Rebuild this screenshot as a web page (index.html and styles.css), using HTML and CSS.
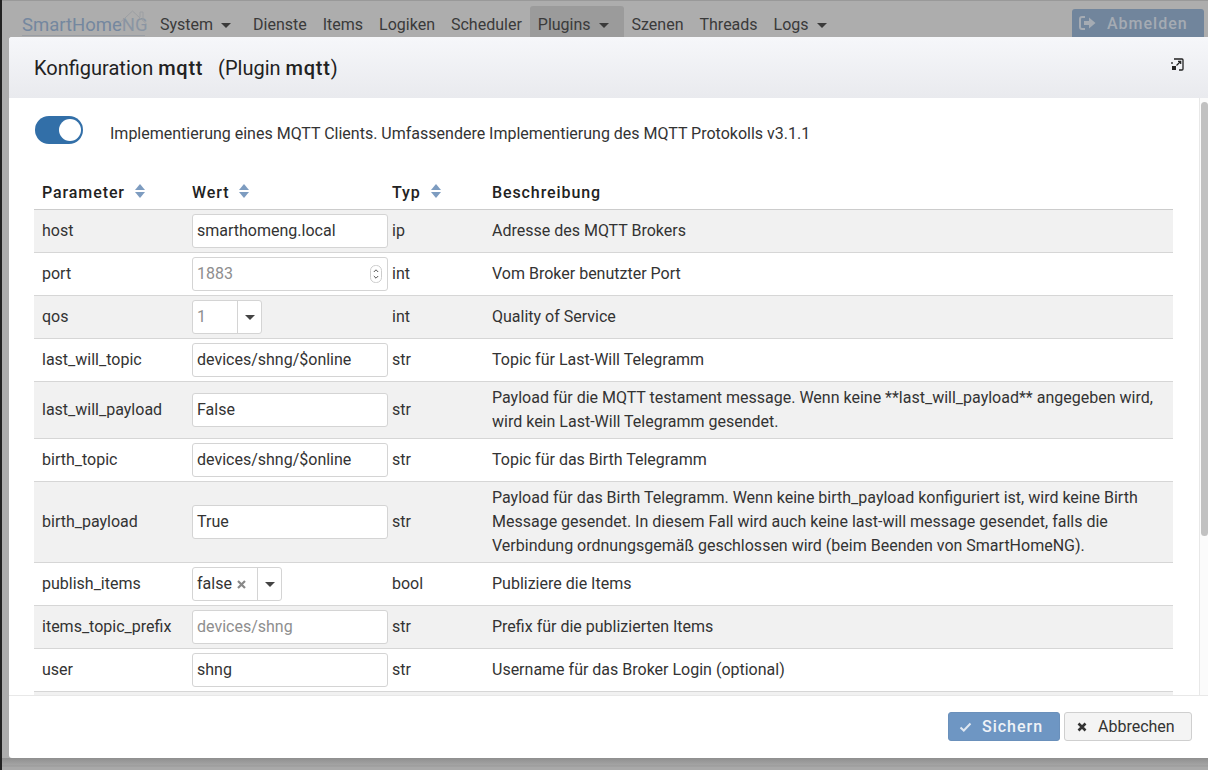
FILE: index.html
```html
<!DOCTYPE html>
<html lang="de">
<head>
	<meta charset="utf-8">
	<title>SmartHomeNG</title>
	<link rel="stylesheet" href="styles.css">
</head>
<body>

<div class="desktop-edge"></div>

<nav class="navbar">
	<a class="brand"><span class="brand-main">SmartHome</span><span class="brand-ng">NG</span>
		<svg class="brand-roof" width="31" height="15" viewBox="0 0 31 15"><path d="M1 14.500 L15.500 1 L30 14.500 M23 7 V2 H26 V10.500" fill="none" stroke="#9c9fa3" stroke-width="1"/></svg>
	</a>
	<a class="nav-item nav-system">System <span class="caret"></span></a>
	<a class="nav-item">Dienste</a>
	<a class="nav-item">Items</a>
	<a class="nav-item">Logiken</a>
	<a class="nav-item">Scheduler</a>
	<a class="nav-item nav-active">Plugins <span class="caret"></span></a>
	<a class="nav-item">Szenen</a>
	<a class="nav-item">Threads</a>
	<a class="nav-item">Logs <span class="caret"></span></a>
	<button class="logout">
		<svg width="17" height="14" viewBox="0 0 17 14"><path d="M6 1 H3 Q1 1 1 3 V11 Q1 13 3 13 H6" fill="none" stroke="#a5abb3" stroke-width="2"/><path d="M5 5 H10 V1.500 L16.500 7 L10 12.500 V9 H5 Z" fill="#a5abb3"/></svg>
		Abmelden
	</button>
</nav>

<div class="modal">
	<div class="modal-header">
		<h4 class="modal-title">Konfiguration <b>mqtt</b> &nbsp; (Plugin <b>mqtt</b>)</h4>
		<svg class="expand" width="13" height="13" viewBox="0 0 13 13"><path d="M3 1 H11 Q12 1 12 2 V11 Q12 12 11 12 H8 M1 4 V6" fill="none" stroke="#222" stroke-width="1.300"/><rect x="1" y="8" width="4" height="4" fill="#222"/><path d="M5.500 7.500 L9.500 3.500 M7 3.300 H9.700 V6" fill="none" stroke="#222" stroke-width="1.200"/></svg>
	</div>

	<div class="modal-body">
		<div class="scrollbar"><div class="scroll-thumb"></div></div>

		<div class="intro">
			<span class="switch"><span class="switch-knob"></span></span>
			<span class="intro-text">Implementierung eines MQTT Clients. Umfassendere Implementierung des MQTT Protokolls v3.1.1</span>
		</div>

		<table class="params">
			<thead>
				<tr>
					<th class="col-name">Parameter <span class="sort"></span></th>
					<th class="col-value">Wert <span class="sort"></span></th>
					<th class="col-type">Typ <span class="sort"></span></th>
					<th>Beschreibung</th>
				</tr>
			</thead>
			<tbody>
				<tr>
					<td>host</td>
					<td class="col-value"><div class="field">smarthomeng.local</div></td>
					<td class="col-type">ip</td>
					<td>Adresse des MQTT Brokers</td>
				</tr>
				<tr>
					<td>port</td>
					<td class="col-value"><div class="field muted">1883
						<svg class="spinner" width="12" height="18" viewBox="0 0 12 18"><rect x="0.500" y="0.500" width="11" height="17" rx="5" fill="#fff" stroke="#ccc"/><path d="M3.800 7 L6 4.800 L8.200 7 M3.800 11 L6 13.200 L8.200 11" fill="none" stroke="#555" stroke-width="1"/></svg>
					</div></td>
					<td class="col-type">int</td>
					<td>Vom Broker benutzter Port</td>
				</tr>
				<tr>
					<td>qos</td>
					<td class="col-value"><div class="select select-qos"><span class="select-value muted">1</span><span class="select-arrow"><span class="caret"></span></span></div></td>
					<td class="col-type">int</td>
					<td>Quality of Service</td>
				</tr>
				<tr>
					<td>last_will_topic</td>
					<td class="col-value"><div class="field">devices/shng/$online</div></td>
					<td class="col-type">str</td>
					<td>Topic für Last-Will Telegramm</td>
				</tr>
				<tr>
					<td>last_will_payload</td>
					<td class="col-value"><div class="field">False</div></td>
					<td class="col-type">str</td>
					<td>Payload für die MQTT testament message. Wenn keine **last_will_payload** angegeben wird, wird kein Last-Will Telegramm gesendet.</td>
				</tr>
				<tr>
					<td>birth_topic</td>
					<td class="col-value"><div class="field">devices/shng/$online</div></td>
					<td class="col-type">str</td>
					<td>Topic für das Birth Telegramm</td>
				</tr>
				<tr>
					<td>birth_payload</td>
					<td class="col-value"><div class="field">True</div></td>
					<td class="col-type">str</td>
					<td>Payload für das Birth Telegramm. Wenn keine birth_payload konfiguriert ist, wird keine Birth Message gesendet. In diesem Fall wird auch keine last-will message gesendet, falls die Verbindung ordnungsgemäß geschlossen wird (beim Beenden von SmartHomeNG).</td>
				</tr>
				<tr>
					<td>publish_items</td>
					<td class="col-value"><div class="select select-bool"><span class="select-value">false <svg class="clear" width="9" height="9" viewBox="0 0 9 9"><path d="M1 1 L8 8 M8 1 L1 8" fill="none" stroke="#888" stroke-width="2.200"/></svg></span><span class="select-arrow"><span class="caret"></span></span></div></td>
					<td class="col-type">bool</td>
					<td>Publiziere die Items</td>
				</tr>
				<tr>
					<td>items_topic_prefix</td>
					<td class="col-value"><div class="field muted">devices/shng</div></td>
					<td class="col-type">str</td>
					<td>Prefix für die publizierten Items</td>
				</tr>
				<tr>
					<td>user</td>
					<td class="col-value"><div class="field">shng</div></td>
					<td class="col-type">str</td>
					<td>Username für das Broker Login (optional)</td>
				</tr>
				<tr>
					<td></td>
					<td class="col-value"><div class="field"></div></td>
					<td class="col-type"></td>
					<td></td>
				</tr>
			</tbody>
		</table>
	</div>

	<div class="modal-footer">
		<button class="btn btn-save">
			<svg width="13" height="10" viewBox="0 0 13 10"><path d="M1.500 5.500 L4.800 8.500 L11.500 1.500" fill="none" stroke="#dfe7f1" stroke-width="2"/></svg>
			Sichern
		</button>
		<button class="btn btn-cancel">
			<svg width="10" height="10" viewBox="0 0 10 10"><path d="M1.500 1.500 L8.500 8.500 M8.500 1.500 L1.500 8.500" fill="none" stroke="#333" stroke-width="2.600"/></svg>
			Abbrechen
		</button>
	</div>
</div>

</body>
</html>
```

FILE: styles.css
```css
html, body {
	margin: 0;
	height: 100%;
	overflow: hidden;
}

body {
	position: relative;
	background: linear-gradient(#adadad 758px, #8f8f8f 758px, #a4a4a4 765px, #999 766px, #a9a9a9 767px);
	font-family: Roboto, sans-serif;
	font-size: 16px;
	line-height: 24px;
	color: #333;
}

/* dark sliver of the desktop behind the browser window */
.desktop-edge {
	position: absolute;
	left: 0;
	top: 0;
	bottom: 0;
	width: 2px;
	background: #222;
}

.navbar {
	display: flex;
	align-items: flex-end;
	height: 37px;
	padding: 0 4px 0 22px;
	box-sizing: border-box;
	border-top: 1px solid #999;
	background: #adadad;
	color: #3a3a3a;
}

.brand {
	position: relative;
	width: 130px;
	height: 24px;
	font-size: 18.500px;
	color: #74879f;
}

.brand::after {
	content: "";
	position: absolute;
	left: 0;
	width: 123px;
	top: 22px;
	height: 1px;
	background: #9a9ea4;
}

.brand-ng {
	color: #8a95a3;
}

.brand-roof {
	position: absolute;
	left: 95px;
	top: -3px;
}

.nav-item {
	height: 31px;
	box-sizing: border-box;
	padding: 7px 8px 0;
}

.nav-system {
	margin-right: 6px;
}

.nav-active {
	background: #9b9b9b;
	border-radius: 3px 3px 0 0;
	padding-right: 15px;
}

.caret {
	display: inline-block;
	width: 0;
	height: 0;
	margin-left: 4px;
	vertical-align: 2px;
	border-top: 5px solid #3a3a3a;
	border-left: 5px solid transparent;
	border-right: 5px solid transparent;
}

.logout {
	display: flex;
	align-items: center;
	gap: 11px;
	margin-left: auto;
	width: 132px;
	height: 28px;
	padding: 0 0 0 7px;
	border: 0;
	border-radius: 3px 3px 0 0;
	background: #71859c;
	color: #a5abb3;
	font: 500 16px Roboto, sans-serif;
	letter-spacing: 1px;
}

.modal {
	position: absolute;
	left: 9px;
	right: 0;
	top: 37px;
	height: 721px;
	display: flex;
	flex-direction: column;
	background: #fff;
	border-radius: 3px 0 0 3px;
}

.modal-header {
	position: relative;
	flex: none;
	height: 61px;
	padding: 0 25px;
	box-sizing: border-box;
	display: flex;
	align-items: center;
	background: linear-gradient(#f6f7fa, #e9eaee);
	border-radius: 3px 0 0 0;
}

.modal-title {
	margin: 0;
	font-size: 20px;
	font-weight: 400;
	color: #222;
}

.modal-title b {
	font-weight: 500;
	letter-spacing: 0.75px;
}

.expand {
	position: absolute;
	right: 24px;
	top: 21px;
}

.modal-body {
	position: relative;
	flex: 1;
	overflow: hidden;
	padding: 0 26px 0 25px;
	border-bottom: 1px solid #e8e8e8;
}

.scrollbar {
	position: absolute;
	right: 0;
	top: 0;
	bottom: 0;
	width: 7px;
	padding: 4px 0 0 1px;
	background: #fbfbfb;
	border-left: 1px solid #e8e8e8;
}

.scroll-thumb {
	width: 7px;
	height: 434px;
	border-radius: 4px;
	background: #c1c1c1;
}

.intro {
	display: flex;
	align-items: center;
	height: 65px;
	margin-bottom: 14px;
	padding-left: 1px;
}

.intro-text {
	padding-top: 6px;
}

.switch {
	flex: none;
	display: block;
	position: relative;
	width: 48px;
	height: 28px;
	margin-right: 27px;
	margin-top: -1px;
	border-radius: 14px;
	background: #326fa8;
}

.switch-knob {
	position: absolute;
	left: 24px;
	top: 3px;
	width: 22px;
	height: 22px;
	border-radius: 50%;
	background: #fff;
}

.params {
	width: 1139px;
	border-collapse: collapse;
	table-layout: fixed;
}

.params th {
	height: 32px;
	padding: 0 8px;
	text-align: left;
	font-weight: 500;
	letter-spacing: 0.9px;
	white-space: nowrap;
	color: #222;
}

.params thead tr {
	border-bottom: 1px solid #ccc;
}

.params td {
	padding: 4px 8px;
	border-bottom: 1px solid #d6d6d6;
}

.params tbody tr:nth-child(odd) {
	background: #f1f1f1;
}

.col-name {
	width: 134px;
}

.params .col-value {
	width: 200px;
	box-sizing: border-box;
	padding-right: 0;
}

.params .col-type {
	width: 84px;
}

.sort {
	display: inline-block;
	position: relative;
	width: 11px;
	height: 14px;
	margin-left: 5px;
	vertical-align: 0;
}

.sort::before,
.sort::after {
	content: "";
	position: absolute;
	left: 0;
	border-left: 5.500px solid transparent;
	border-right: 5.500px solid transparent;
}

.sort::before {
	top: 0;
	border-bottom: 6px solid #7d9cc0;
}

.sort::after {
	bottom: 0;
	border-top: 6px solid #7d9cc0;
}

.field {
	display: flex;
	align-items: center;
	justify-content: space-between;
	width: 196px;
	height: 34px;
	box-sizing: border-box;
	padding: 0 4px;
	background: #fff;
	border: 1px solid #d4d4d4;
	border-radius: 3px;
	color: #333;
}

.field.muted {
	color: #8e8e8e;
}

.muted {
	color: #8e8e8e;
}

.spinner {
	margin-right: 1px;
}

.select {
	display: inline-flex;
	height: 34px;
	box-sizing: border-box;
	vertical-align: top;
	background: #fff;
	border: 1px solid #d4d4d4;
	border-radius: 3px;
	line-height: 32px;
}

.select-value {
	display: block;
	padding-left: 4px;
	white-space: nowrap;
}

.select-qos .select-value {
	width: 40px;
}

.select-bool .select-value {
	width: 60px;
}

.clear {
	margin-left: 1px;
}

.select-arrow {
	display: block;
	width: 23px;
	border-left: 1px solid #d4d4d4;
	text-align: center;
}

.select-arrow .caret {
	margin-left: 0;
	border-top-color: #444;
}

.modal-footer {
	flex: none;
	display: flex;
	justify-content: flex-end;
	align-items: flex-start;
	gap: 4px;
	height: 62px;
	padding: 16px 16px 0 0;
	box-sizing: border-box;
}

.btn {
	display: flex;
	align-items: center;
	height: 29px;
	box-sizing: border-box;
	border-radius: 3px;
	font: 16px Roboto, sans-serif;
}

.btn-save {
	gap: 10px;
	width: 112px;
	padding: 0 0 0 10px;
	background: #6e96c3;
	border: 1px solid #6a90bb;
	color: #eef2f7;
	font-weight: 500;
	letter-spacing: 1px;
}

.btn-cancel {
	gap: 11px;
	width: 128px;
	padding: 0 0 0 12px;
	background: #f4f4f4;
	border: 1px solid #cfcfcf;
	color: #333;
}
```
